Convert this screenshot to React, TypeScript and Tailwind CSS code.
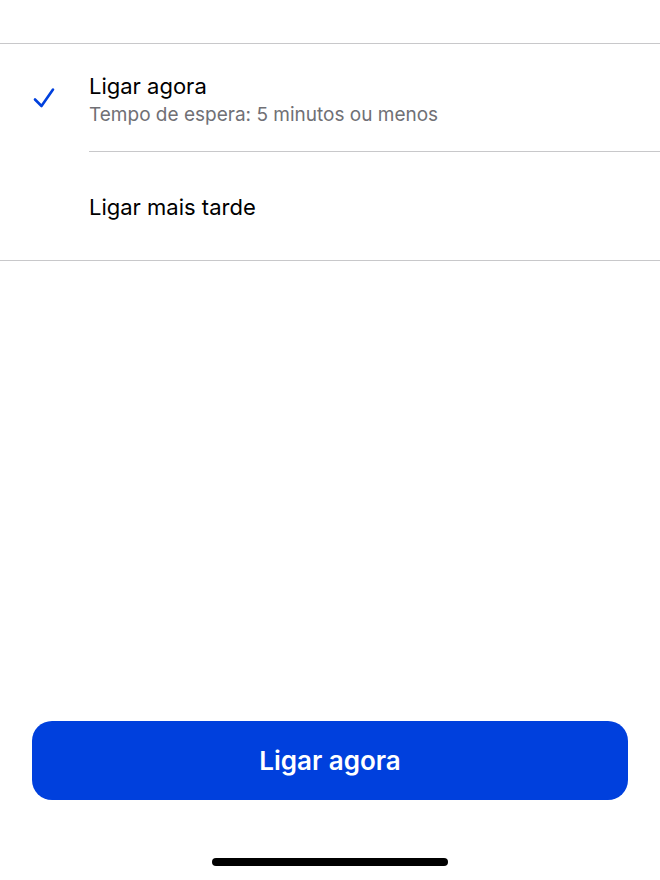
import React from "react";

const CheckIcon = () => (
  <svg width="24" height="24" viewBox="0 0 24 24" fill="none">
    <path
      d="M3 13.5 L9.5 20 L21 3.5"
      stroke="#0040dd"
      strokeWidth="2.6"
      strokeLinecap="round"
      strokeLinejoin="round"
    />
  </svg>
);

export default function App() {
  return (
    <div
      className="w-[660px] h-[880px] bg-white flex flex-col text-black"
      style={{ fontFamily: "Inter, 'Noto Sans', sans-serif" }}
    >
      <div className="h-[44px] border-b border-[#c8c8ca]" />

      <div className="border-b border-[#c8c8ca]">
        <div className="flex h-[107px]">
          <div className="w-[89px] pl-[32px] pt-[42px]">
            <CheckIcon />
          </div>
          <div className="flex-1 flex flex-col pt-[28px]">
            <span className="text-[22px] leading-[28px]">Ligar agora</span>
            <span className="text-[19px] leading-[30px] text-[#707075]">
              Tempo de espera: 5 minutos ou menos
            </span>
          </div>
        </div>
        <div className="ml-[89px] border-t border-[#c8c8ca]" />
        <div className="h-[108px] pl-[89px] pt-[41px]">
          <span className="text-[22px] leading-[28px]">Ligar mais tarde</span>
        </div>
      </div>

      <div className="flex-1" />

      <div className="px-[32px]">
        <button className="w-full h-[79px] rounded-[20px] bg-[#0040dd] text-white text-[26px] font-semibold">
          Ligar agora
        </button>
      </div>

      <div className="h-[80px] flex justify-center pt-[58px]">
        <div className="w-[236px] h-[8px] rounded-full bg-black" />
      </div>
    </div>
  );
}
